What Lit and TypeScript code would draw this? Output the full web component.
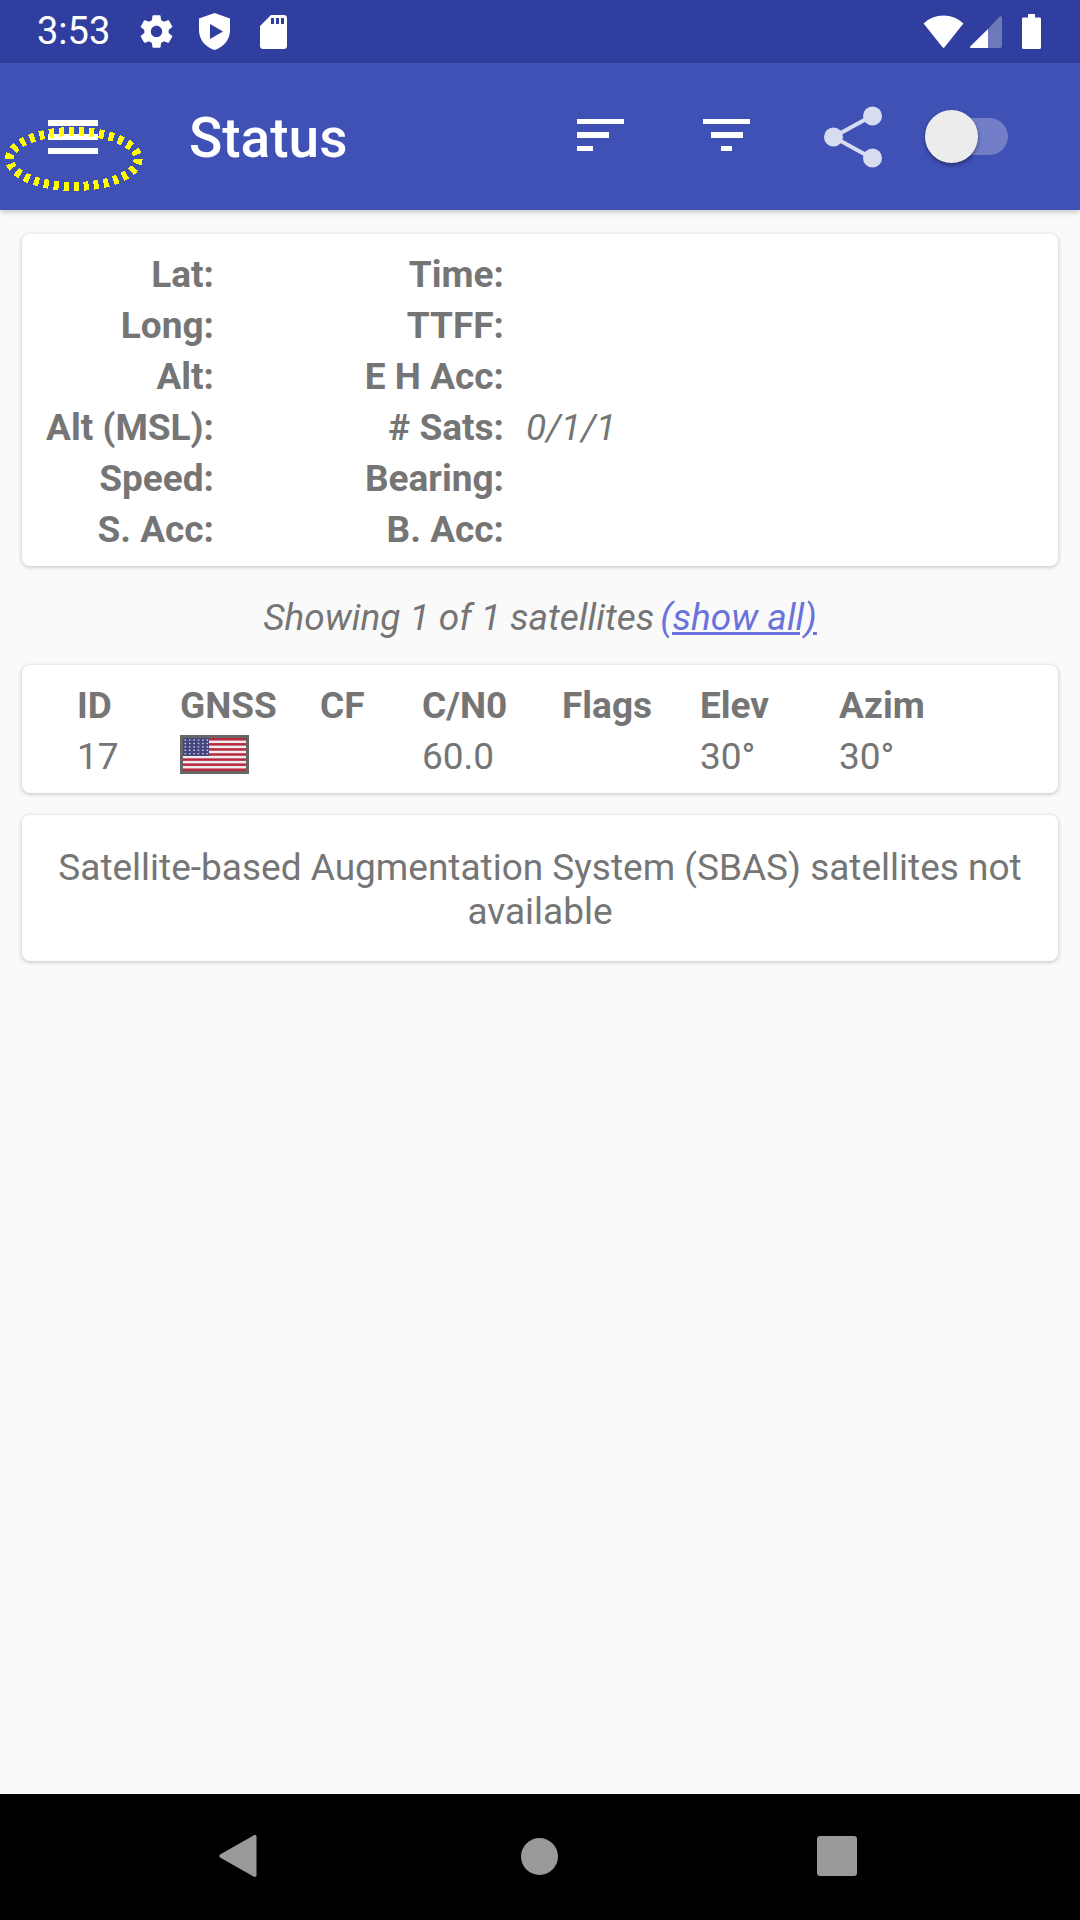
import { LitElement, html, css, svg } from "lit";
import { customElement } from "lit/decorators.js";

const GEAR =
  "M19.43 12.98c.04-.32.07-.64.07-.98s-.03-.66-.07-.98l2.11-1.65c.19-.15.24-.42.12-.64l-2-3.46c-.12-.22-.39-.3-.61-.22l-2.49 1c-.52-.4-1.08-.73-1.69-.98l-.38-2.65C14.46 2.18 14.25 2 14 2h-4c-.25 0-.46.18-.49.42l-.38 2.65c-.61.25-1.17.59-1.69.98l-2.49-1c-.23-.09-.49 0-.61.22l-2 3.46c-.13.22-.07.49.12.64l2.11 1.65c-.04.32-.07.65-.07.98s.03.66.07.98l-2.11 1.65c-.19.15-.24.42-.12.64l2 3.46c.12.22.39.3.61.22l2.49-1c.52.4 1.08.73 1.69.98l.38 2.65c.03.24.24.42.49.42h4c.25 0 .46-.18.49-.42l.38-2.65c.61-.25 1.17-.59 1.69-.98l2.49 1c.23.09.49 0 .61-.22l2-3.46c.12-.22.07-.49-.12-.64l-2.11-1.65zM12 15.5c-1.93 0-3.5-1.57-3.5-3.5s1.57-3.5 3.5-3.5 3.5 1.57 3.5 3.5-1.57 3.5-3.5 3.5z";

const POSITION_ROWS = [
  ["Lat:", "Time:", ""],
  ["Long:", "TTFF:", ""],
  ["Alt:", "E H Acc:", ""],
  ["Alt (MSL):", "# Sats:", "0/1/1"],
  ["Speed:", "Bearing:", ""],
  ["S. Acc:", "B. Acc:", ""],
];

const SAT_HEADERS = ["ID", "GNSS", "CF", "C/N0", "Flags", "Elev", "Azim"];

// stripes and star dots for the little US flag
const stripes = Array.from({ length: 7 }, (_, i) =>
  svg`<rect x="0" y="${(i * 2 * 33) / 13}" width="63" height="${33 / 13}" fill="#b8283f"></rect>`
);
const stars = Array.from({ length: 30 }, (_, i) =>
  svg`<rect x="${1.5 + (i % 6) * 4.4}" y="${1.4 + Math.floor(i / 6) * 3.4}" width="1.6" height="1.4" fill="#c9cbe2"></rect>`
);

@customElement("app-root")
export class AppRoot extends LitElement {
  static styles = css`
    :host {
      display: flex;
      flex-direction: column;
      position: relative;
      width: 1080px;
      height: 1920px;
      background: #fafafa;
      font-family: Roboto, "Liberation Sans", sans-serif;
      color: #757575;
      overflow: hidden;
    }
    svg {
      display: block;
      flex: none;
    }
    .status {
      flex: none;
      height: 63px;
      background: #303f9f;
      display: flex;
      align-items: center;
      color: #fff;
      padding-left: 37px;
    }
    .clock {
      font-size: 38px;
      width: 100px;
      line-height: 65px;
    }
    .status .fill {
      flex: 1;
    }
    .toolbar {
      flex: none;
      height: 147px;
      background: #3f51b5;
      display: flex;
      align-items: center;
      box-shadow: 0 2px 6px rgba(0, 0, 0, 0.22);
      position: relative;
      color: #fff;
    }
    .menu {
      margin-left: 48px;
      width: 50px;
      display: flex;
      flex-direction: column;
      gap: 8px;
    }
    .menu i {
      display: block;
      height: 6px;
      background: #fff;
    }
    .title {
      font-size: 55px;
      font-weight: 500;
      margin-left: 91px;
      width: 388px;
      position: relative;
      top: 1px;
    }
    .bars {
      width: 47px;
      display: flex;
      flex-direction: column;
      gap: 8px;
      position: relative;
      top: -1.5px;
    }
    .bars i {
      display: block;
      height: 5.5px;
      background: #fff;
    }
    .bars.filter {
      align-items: center;
      margin-left: 79px;
    }
    .share {
      margin-left: 74px;
      opacity: 0.8;
    }
    .switch {
      margin-left: 48px;
      width: 78px;
      height: 37px;
      border-radius: 19px;
      background: #727fc8;
      position: relative;
    }
    .knob {
      position: absolute;
      left: -5px;
      top: -8px;
      width: 53px;
      height: 53px;
      border-radius: 50%;
      background: #ececec;
      box-shadow: 0 2px 4px rgba(0, 0, 0, 0.4);
    }
    .content {
      flex: 1;
      padding: 24px 22px 0;
      display: flex;
      flex-direction: column;
    }
    .card {
      background: #fff;
      border-radius: 8px;
      box-shadow: 0 1px 4px rgba(0, 0, 0, 0.24);
    }
    .position {
      height: 332px;
      box-sizing: border-box;
      padding: 14.5px 0 0 24px;
      display: grid;
      grid-template-columns: 168px 290px 1fr;
      grid-auto-rows: 51px;
      font-size: 37px;
      align-items: center;
    }
    .label {
      font-weight: 700;
      text-align: right;
    }
    .value {
      font-style: italic;
      padding-left: 22px;
    }
    .showing {
      height: 99px;
      box-sizing: border-box;
      padding-top: 4px;
      display: flex;
      justify-content: center;
      align-items: center;
      gap: 6px;
      font-size: 37px;
      font-style: italic;
    }
    .showing a {
      color: #6a72dc;
      text-decoration: underline;
    }
    .sats {
      height: 128px;
      box-sizing: border-box;
      padding: 14.5px 0 0 55px;
      display: grid;
      grid-template-columns: 103px 140px 102px 140px 138px 139px 1fr;
      grid-template-rows: 51px 51px;
      align-items: center;
      font-size: 37px;
    }
    .head {
      font-weight: 700;
    }
    .flag {
      width: 63px;
      height: 33px;
      border: 3px solid #666;
      margin-top: -3px;
    }
    .sbas {
      margin-top: 22px;
      height: 146px;
      box-sizing: border-box;
      padding: 30.5px 24px 0;
      text-align: center;
      font-size: 37px;
      line-height: 44px;
    }
    .nav {
      flex: none;
      height: 126px;
      background: #000;
      display: flex;
      align-items: center;
      position: relative;
    }
    .nav svg {
      position: relative;
      top: -1px;
    }
    .nav .back {
      margin-left: 219px;
    }
    .nav .home {
      margin-left: 264px;
    }
    .nav .recent {
      margin-left: 259px;
    }
    .mark {
      position: absolute;
      left: 0;
      top: 120px;
      pointer-events: none;
    }
  `;

  render() {
    return html`
      <div class="status">
        <span class="clock">3:53</span>
        <svg width="39" height="39" viewBox="0 0 24 24" fill="#fff"><path d=${GEAR}></path></svg>
        <svg style="margin-left:23px" width="31" height="37" viewBox="0 0 31 37" fill="#fff">
          <path fill-rule="evenodd" d="M15.5 0L31 5.5V17C31 27 24.5 34 15.5 37C6.5 34 0 27 0 17V5.5ZM11 11V26L24 18.5Z"></path>
        </svg>
        <svg style="margin-left:30px" width="27" height="34" viewBox="0 0 27 34" fill="#fff">
          <path fill-rule="evenodd" d="M11 0H24C25.7 0 27 1.3 27 3V31C27 32.7 25.7 34 24 34H3C1.3 34 0 32.7 0 31V11ZM11 3V9H14V3ZM16 3V9H19V3ZM21 3V9H24V3Z"></path>
        </svg>
        <span class="fill"></span>
        <svg width="41" height="33" viewBox="0 0 41 33" fill="#fff">
          <path d="M0.6 8.5C6 3.2 13 0.5 20.5 0.5S35 3.2 40.4 8.5L21.5 32.2C21 32.9 20 32.9 19.5 32.2Z"></path>
        </svg>
        <svg style="margin-left:6px" width="32" height="32" viewBox="0 0 32 32">
          <path fill="#fff" fill-opacity="0.3" d="M18 13L29.5 0.7C30.4-.2 32 .4 32 1.7V30C32 31 31 32 30 32H18Z"></path>
          <path fill="#fff" d="M18 13V32H1C0 32-.4 31 .4 30.2Z"></path>
        </svg>
        <svg style="margin:0 39px 0 20px" width="19" height="35" viewBox="0 0 19 35" fill="#fff">
          <path d="M6 0H13V3.5H17.5C18.4 3.5 19 4.1 19 5V33.5C19 34.4 18.4 35 17.5 35H1.5C.6 35 0 34.4 0 33.5V5C0 4.1 .6 3.5 1.5 3.5H6Z"></path>
        </svg>
      </div>
      <div class="toolbar">
        <div class="menu"><i></i><i></i><i></i></div>
        <div class="title">Status</div>
        <div class="bars">
          <i style="width:47px"></i><i style="width:32px"></i><i style="width:16px"></i>
        </div>
        <div class="bars filter">
          <i style="width:47px"></i><i style="width:32px"></i><i style="width:11px"></i>
        </div>
        <svg class="share" width="58" height="62" viewBox="0 0 58 62" fill="#fff" stroke="#fff">
          <path d="M9.5 31L48.5 9.5M9.5 31L48.5 52.5" stroke-width="4" fill="none"></path>
          <circle cx="9.5" cy="31" r="9.5" stroke="none"></circle>
          <circle cx="48.5" cy="10" r="9.5" stroke="none"></circle>
          <circle cx="48.5" cy="52" r="9.5" stroke="none"></circle>
        </svg>
        <div class="switch"><div class="knob"></div></div>
      </div>
      <div class="content">
        <div class="card position">
          ${POSITION_ROWS.map(
            ([a, b, v]) => html`
              <div class="label">${a}</div>
              <div class="label">${b}</div>
              <div class="value">${v}</div>
            `
          )}
        </div>
        <div class="showing">
          <span>Showing 1 of 1 satellites</span><a>(show all)</a>
        </div>
        <div class="card sats">
          ${SAT_HEADERS.map((h) => html`<div class="head">${h}</div>`)}
          <div>17</div>
          <div>
            <svg class="flag" viewBox="0 0 63 33" preserveAspectRatio="none">
              <rect width="63" height="33" fill="#eee"></rect>
              ${stripes}
              <rect width="26" height="18" fill="#44447e"></rect>
              ${stars}
            </svg>
          </div>
          <div></div>
          <div>60.0</div>
          <div></div>
          <div>30°</div>
          <div>30°</div>
        </div>
        <div class="card sbas">
          Satellite-based Augmentation System (SBAS) satellites not available
        </div>
      </div>
      <div class="nav">
        <svg class="back" width="38" height="42" viewBox="0 0 38 42" fill="#999">
          <path d="M1 19.5L34.5 .6C36-.4 37.5.2 37.5 2V40C37.5 41.8 36 42.4 34.5 41.4L1 22.5C0 21.7 0 20.3 1 19.5Z"></path>
        </svg>
        <svg class="home" width="37" height="37" viewBox="0 0 37 37" fill="#999">
          <circle cx="18.5" cy="18.5" r="18.5"></circle>
        </svg>
        <svg class="recent" width="40" height="40" viewBox="0 0 40 40" fill="#999">
          <rect width="40" height="40" rx="3"></rect>
        </svg>
      </div>
      <svg class="mark" width="150" height="80" viewBox="0 0 150 80">
        <ellipse cx="73.8" cy="39" rx="64.3" ry="27.5" fill="none" stroke="#ffff00" stroke-width="9" stroke-dasharray="5 5" shape-rendering="crispEdges"></ellipse>
      </svg>
    `;
  }
}
